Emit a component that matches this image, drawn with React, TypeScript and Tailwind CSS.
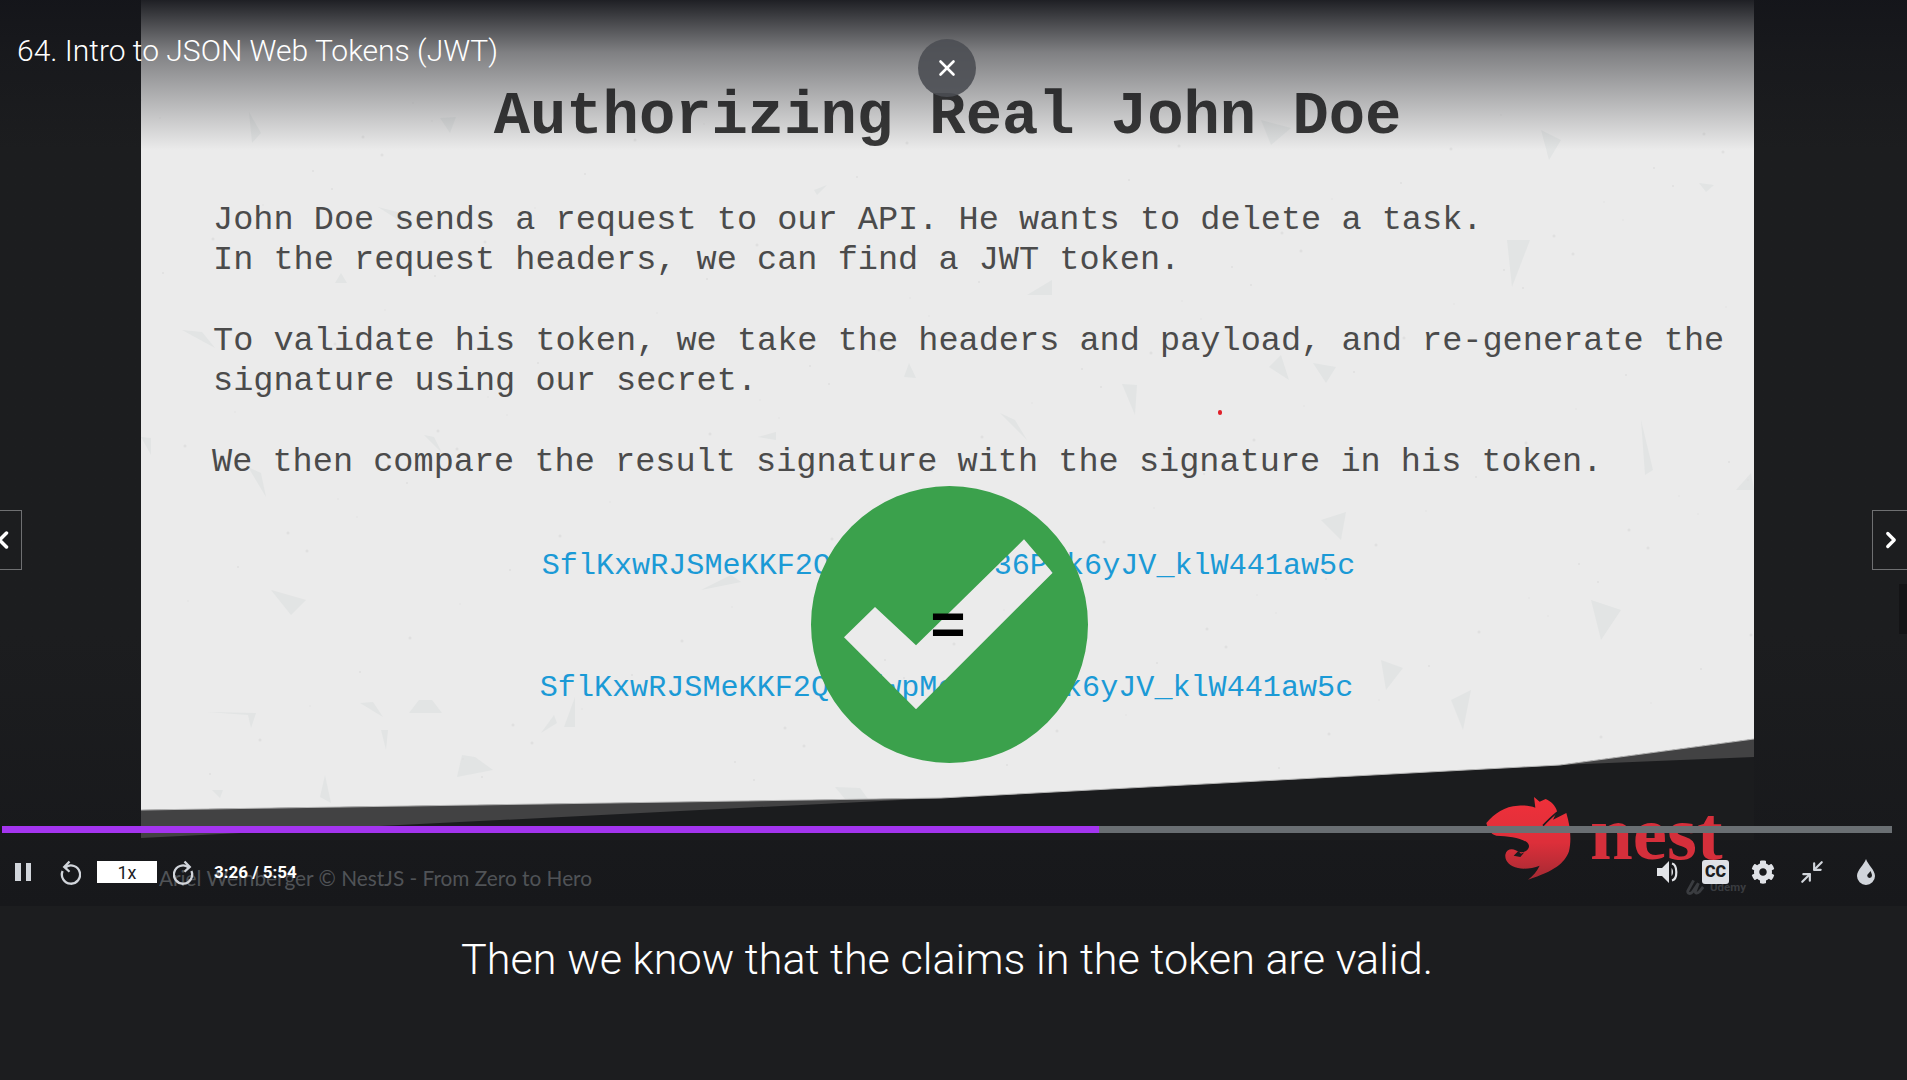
import { FaCog } from "react-icons/fa";
import { ChevronLeft, ChevronRight, Minimize2, X } from "lucide-react";

// torn paper specks on the slide, coordinates are relative to the slide box
const specks = [
  "1366,240 1389,240 1371,287",
  "981,384 996,385 994,415",
  "1172,363 1195,367 1185,383",
  "1128,367 1140,355 1148,380",
  "886,295 911,280 911,295",
  "859,413 874,420 886,440",
  "1595,490 1610,473 1613,490",
  "1558,183 1573,185 1565,192",
  "41,330 61,332 74,348",
  "0,437 10,438 10,455",
  "283,435 293,437 301,453",
  "107,467 120,473 125,497",
  "763,377 768,363 775,378",
  "617,437 635,432 635,440",
  "673,190 686,185 676,195",
  "237,207 260,213 270,228",
  "194,283 200,273 206,283",
  "219,703 232,702 242,717",
  "268,713 278,700 291,700 301,713",
  "316,777 321,755 334,757 352,770",
  "240,730 247,730 245,750",
  "400,733 413,715 416,723",
  "423,727 434,697 434,727",
  "179,797 184,775 190,803",
  "71,790 82,790 79,798",
  "66,712 115,713 110,728 107,715",
  "694,787 719,788 727,799 704,799",
  "108,112 120,133 111,143",
  "299,118 315,117 309,133",
  "1310,700 1330,690 1322,730",
  "1450,600 1480,610 1460,640",
  "1240,660 1262,668 1245,690",
  "1500,420 1512,470 1504,475",
  "560,590 590,575 600,582",
  "130,590 165,600 150,615",
  "1180,520 1205,512 1200,540",
  "1400,130 1420,140 1408,160",
  "1120,120 1150,128 1130,145",
];

const flecks = Array.from({ length: 170 }, (_, i) => ({
  x: (i * 397) % 1613,
  y: 100 + ((i * 263) % 690),
  r: 0.7 + (i % 3) * 0.4,
}));

const Rewind = ({ flip }: { flip?: boolean }) => (
  <svg
    viewBox="0 0 24 26"
    className={`h-[25px] w-[23px] ${flip ? "-scale-x-100" : ""}`}
    fill="none"
    stroke="#d1d5db"
    strokeWidth="2.4"
  >
    <path d="M8 7.5a9.5 9.5 0 1 1-3.2 4" />
    <path d="M12 1.5 6.5 7.2l5.5 5" />
  </svg>
);

const Lion = () => (
  <svg viewBox="130 220 270 270" className="absolute left-[1483px] top-[793px] h-[90px] w-[90px]">
    <defs>
      <linearGradient id="lion" x1="0" y1="0" x2="0" y2="1">
        <stop offset="0" stopColor="#f0303a" />
        <stop offset="0.55" stopColor="#dd2f3a" />
        <stop offset="1" stopColor="#a42a33" />
      </linearGradient>
    </defs>
    <path
      fill="url(#lion)"
      d="M140 310C165 280 195 260 235 258C255 256 272 258 287 264L283 232L300 246L318 238C335 246 348 258 352 275L340 300L380 280C392 320 396 360 388 395C375 430 345 455 265 480C280 468 292 455 300 438C280 445 255 450 235 445C210 440 195 425 197 405C200 390 215 385 228 392C240 400 250 400 262 392C270 385 270 375 262 368C240 352 205 350 170 348C155 345 145 330 140 310Z"
    />
    <path d="M352 278c-14 12-28 24-42 40" stroke="#1a1b1e" strokeWidth="5" fill="none" />
    <path d="M222 408l14-14 8 8 10-4-12 14z" fill="#1a1b1e" />
  </svg>
);

const App = () => {
  return (
    <div className="relative flex h-screen w-full flex-col overflow-hidden bg-[#1c1d1f] font-['Roboto',sans-serif]">
      <div className="relative h-[906px] shrink-0 bg-gradient-to-b from-[#1c1d1f] from-[70%] to-[#17181b] pl-[141px]">
        {/* slide frame of the video */}
        <div className="relative h-[840px] w-[1613px] bg-[#ebebeb] font-['Liberation_Mono',monospace]">
          <svg viewBox="0 0 1613 840" className="absolute inset-0 h-full w-full">
            {specks.map((p) => (
              <polygon key={p} points={p} fill="#e2e4e4" />
            ))}
            {flecks.map((f, i) => (
              <circle key={i} cx={f.x} cy={f.y} r={f.r} fill="#e0e0e0" />
            ))}
            <polygon points="0,810 800,798 1419,765 1613,739 1613,840 0,840" fill="#1b1c1e" />
            <polygon points="0,810 800,798 0,838" fill="#424243" />
            <polygon points="1419,765 1613,739 1613,757" fill="#424243" />
            <polyline points="0,810 800,798 1419,765 1613,739" fill="none" stroke="#b5b5b5" strokeWidth="1" />
          </svg>

          <div className="relative flex flex-col pt-[82px]">
            <h1 className="text-center text-[60.5px] font-bold leading-[70px] text-[#383838]">
              Authorizing Real John Doe
            </h1>
            <div className="mt-[48px] whitespace-pre pl-[72px] text-[33.6px] leading-[40.3px] text-[#4b4b4b]">
              <div>John Doe sends a request to our API. He wants to delete a task.</div>
              <div>In the request headers, we can find a JWT token.</div>
              <div>&nbsp;</div>
              <div>To validate his token, we take the headers and payload, and re-generate the</div>
              <div>signature using our secret.</div>
              <div>&nbsp;</div>
              <div className="-ml-[1px]">We then compare the result signature with the signature in his token.</div>
            </div>
            <div className="mt-[64px] pl-[2px] text-center text-[30.13px] leading-[40px] text-[#1b9ad6]">
              SflKxwRJSMeKKF2QT4fwpMeJf36POk6yJV_klW441aw5c
            </div>
            <div className="mt-[82px] pr-[2px] text-center text-[30.13px] leading-[40px] text-[#1b9ad6]">
              SflKxwRJSMeKKF2QT4fwpMeJf36POk6yJV_klW441aw5c
            </div>
          </div>

          {/* green tick, the white part is a hole in the disc */}
          <svg viewBox="0 0 277 277" className="absolute left-[670px] top-[486px] h-[277px] w-[277px]">
            <path
              fillRule="evenodd"
              fill="#3ba14c"
              d="M138.5 0a138.5 138.5 0 1 0 0 277a138.5 138.5 0 1 0 0-277zM64 121l41 38.300L213 53.300l28.700 33.400L105 223.300 33 151.300z"
            />
          </svg>
          <span className="absolute left-[789px] top-[594px] text-[60px] font-bold leading-[68px] text-black">=</span>
          <span className="absolute left-[1077px] top-[410px] h-[5px] w-[4px] rounded-full bg-[#e0202a]" />
        </div>

        {/* dark fade behind the title */}
        <div className="absolute inset-x-0 top-0 h-[150px] bg-gradient-to-b from-[#14151a]/95 via-[#14151a]/50 via-[35%] to-transparent" />

        <div className="absolute left-[17px] top-[33px] text-[30px] font-light leading-[36px] text-white">
          64. Intro to JSON Web Tokens (JWT)
        </div>
        <button className="absolute left-[918px] top-[39px] flex h-[58px] w-[58px] items-center justify-center rounded-full bg-[#4b4e53]/90 text-white">
          <X size={26} strokeWidth={2.4} />
        </button>

        <button className="absolute -left-[26px] top-[510px] flex h-[60px] w-[48px] items-center justify-end border border-[#6f7072] pr-[4px] text-white">
          <ChevronLeft size={28} strokeWidth={3} />
        </button>
        <button className="absolute left-[1872px] top-[510px] flex h-[60px] w-[48px] items-center border border-[#6f7072] pl-[5px] text-white">
          <ChevronRight size={26} strokeWidth={3} />
        </button>
        <div className="absolute right-0 top-[584px] h-[50px] w-[8px] bg-[#141416]" />

        {/* burned-in watermark of the course video */}
        <Lion />
        <span className="absolute left-[1590px] top-[790px] font-['Liberation_Serif',serif] text-[77px] font-bold leading-[86px] text-[#d52f3b]">
          nest
        </span>
        <span className="absolute left-[159px] top-[865px] font-['Lato',sans-serif] text-[20.800px] leading-[26px] text-[#505357]">
          Ariel Weinberger © NestJS - From Zero to Hero
        </span>
        <div className="absolute left-[1685px] top-[878px] flex items-center gap-[4px] text-[#3a3c40]">
          <svg viewBox="0 0 22 18" className="h-[18px] w-[21px]" fill="none" stroke="currentColor" strokeWidth="3">
            <path d="M9 2 3 13c-1 3 3 4 5 1l6-9-3 8c-1 3 2 3 4 1l4-5" />
          </svg>
          <span className="font-['Roboto',sans-serif] text-[11.500px] font-bold leading-[14px]">Udemy</span>
        </div>

        {/* progress bar */}
        <div className="absolute left-[2px] top-[826px] h-[7px] w-[1890px] bg-[#6a6f73]">
          <div className="h-full w-[1097px] bg-[#a435f0]" />
        </div>

        {/* player controls */}
        <div className="absolute inset-x-0 top-[859px] flex h-[26px] items-center">
          <div className="ml-[15px] flex gap-[5px]">
            <span className="h-[18px] w-[5.500px] bg-[#d1d5db]" />
            <span className="h-[18px] w-[5.500px] bg-[#d1d5db]" />
          </div>
          <div className="ml-[27px]">
            <Rewind />
          </div>
          <div className="ml-[16px] flex h-[22px] w-[60px] items-center justify-center bg-white pt-[1px] text-[18px] leading-none text-[#1c1d1f]">
            1x
          </div>
          <div className="ml-[16px]">
            <Rewind flip />
          </div>
          <span className="ml-[18px] text-[17px] font-bold leading-none text-white">3:26 / 5:54</span>
          <div className="ml-auto flex items-center pr-[32px]">
            <svg viewBox="0 0 22 24" className="h-[24px] w-[22px]" fill="#e2e4e8">
              <path d="M0 8h5l7-7v22l-7-7H0z" />
              <path d="M15 3.500c5.500 1.500 6 15.500 0 17" fill="none" stroke="#e2e4e8" strokeWidth="2.200" />
              <path d="M14.500 8c2 1.500 2 6.500 0 8z" />
            </svg>
            <div className="ml-[23px] flex h-[24px] w-[27px] items-center justify-center rounded-[3px] bg-[#dfe1e6] text-[16px] font-black leading-none text-[#1c1d1f]">
              CC
            </div>
            <FaCog className="ml-[22px] h-[24px] w-[24px] text-[#dfe1e6]" />
            <Minimize2 className="ml-[24px] h-[26px] w-[26px] text-[#d1d5db]" strokeWidth={2} />
            <svg viewBox="0 0 18 26" className="ml-[32px] h-[26px] w-[18px]">
              <path d="M9 0c2 6 9 11 9 17a9 9 0 0 1-18 0C0 11 7 6 9 0z" fill="#d1d5db" />
              <path d="M13.500 12c.8 2 1.500 3 1.500 4.500a2.400 2.400 0 0 1-4.800 0c0-1.500 2.300-2.500 3.300-4.500z" fill="#1c1d1f" />
            </svg>
          </div>
        </div>
      </div>

      <div className="flex justify-center pr-[13px] pt-[30px]">
        <p className="text-[43.200px] font-light leading-[48px] text-white">
          Then we know that the claims in the token are valid.
        </p>
      </div>
    </div>
  );
};

export default App;
